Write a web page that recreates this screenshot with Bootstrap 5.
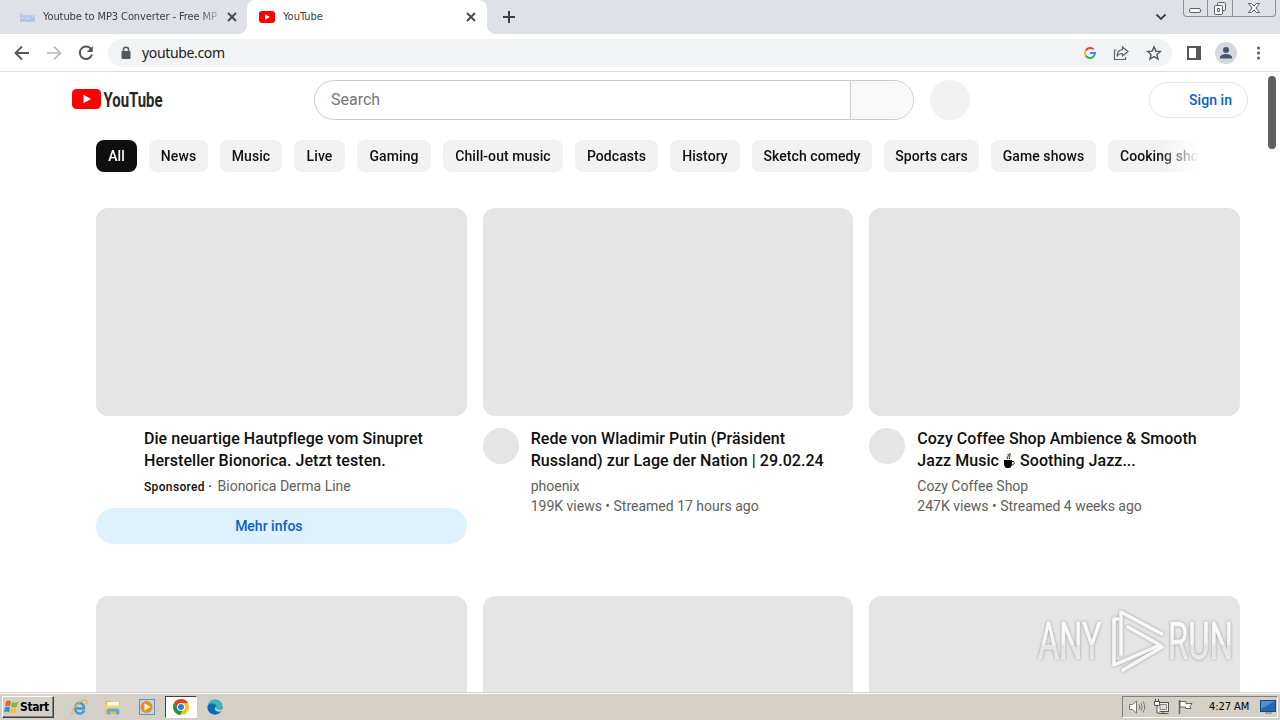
<!DOCTYPE html>
<html lang="en">
<head>
    <meta charset="UTF-8">
    <meta name="viewport" content="width=device-width, initial-scale=1.0">
    <title>YouTube</title>
    <link href="https://cdn.jsdelivr.net/npm/bootstrap@5.3.0/dist/css/bootstrap.min.css" rel="stylesheet">
    <style>
        body { height: 720px; font-family: Roboto, sans-serif; color: #0f0f0f; background: #fff; }
        svg { display: block; flex: none; }
        .ui-font { font-family: "DejaVu Sans Condensed", "DejaVu Sans", sans-serif; }
        .medium-text { font-weight: 500; }

        /* browser frame */
        .tab-strip { height: 34px; background: #dee1e6; font-size: 11px; color: #3c4043; }
        .tab-back { width: 247px; height: 34px; padding: 0 8px 0 19px; }
        .tab-front { width: 240px; height: 34px; padding: 0 10px 0 12px; background: #fff; border-radius: 8px 8px 0 0; }
        .tab-front::before, .tab-front::after { content: ""; position: absolute; bottom: 0; width: 8px; height: 8px; }
        .tab-front::before { left: -8px; background: radial-gradient(circle at 0 0, transparent 7.5px, #fff 8px); }
        .tab-front::after { right: -8px; background: radial-gradient(circle at 100% 0, transparent 7.5px, #fff 8px); }
        .tab-title { width: 178px; letter-spacing: -.1px; -webkit-mask-image: linear-gradient(90deg, #000 155px, rgba(0, 0, 0, .25) 176px); }
        .win-buttons { width: 93px; height: 17px; border: 1px solid #8d9096; border-top: 0; border-radius: 0 0 4px 4px; }
        .win-buttons > div + div { border-left: 1px solid #8d9096; }
        .win-restore { width: 25px; }
        .toolbar { height: 38px; border-bottom: 1px solid #dadce0; padding: 0 13px; }
        .nav-icons { gap: 14px; }
        .omnibox { width: 1064px; height: 28px; border-radius: 14px; background: #f1f3f4; margin-left: 13px; padding: 0 10px 0 12px; }
        .omni-icons { gap: 17px; }
        .address { font-family: "Noto Sans", sans-serif; font-size: 14px; color: #202124; letter-spacing: -.35px; padding-left: 10px; }
        .tool-icons { gap: 14px; margin-left: 15px; }
        .profile { width: 22px; height: 22px; background: #d5d9df; }

        /* page */
        .viewport-area { height: 620px; }
        .masthead { height: 56px; padding-left: 72px; padding-right: 32px; }
        .search-box { width: 600px; height: 40px; border: 1px solid #ccc; border-radius: 20px; font-size: 16px; color: #777; margin-left: 151px; }
        .search-go { width: 63px; background: #f8f8f8; border-left: 1px solid #ccc; }
        .voice { width: 40px; height: 40px; background: #f2f2f2; margin-left: 16px; }
        .sign-in { width: 99px; height: 36px; border: 1px solid #e5e5e5; color: #065fd4; font-size: 14px; padding-right: 15px; letter-spacing: .05px; }
        .chip-bar { display: grid; grid-template-columns: 41px 59px 62px 51px 74px 120px 83px 70px 120px 95px 105px 110px; align-items: center; height: 56px; width: 1101px; margin-left: 96px; gap: 12px; -webkit-mask-image: linear-gradient(90deg, #000 1063px, transparent 1103px); }
        .chip { height: 32px; line-height: 32px; text-align: center; border-radius: 8px; background: #f2f2f2; font-size: 14px; letter-spacing: .07px; }
        .chip-on { background: #0f0f0f; color: #fff; }
        .video-grid { display: grid; grid-template-columns: repeat(3, 1fr); column-gap: 16px; margin: 24px 40px 0 96px; }
        .video-item { height: 388px; }
        .thumb { height: 208px; background: #e5e5e5; border-radius: 12px; }
        .details { gap: 12px; height: 80px; margin-top: 12px; }
        .avatar { width: 36px; height: 36px; }
        .avatar-grey { background: #e5e5e5; }
        .video-title { font-size: 16px; line-height: 22px; letter-spacing: .05px; }
        .video-meta { font-size: 14px; line-height: 20px; color: #606060; }
        .sponsored { font-size: 12px; color: #0f0f0f; letter-spacing: .35px; margin-right: 2px; }
        .cup { display: inline-block; vertical-align: -3px; margin: 0 1px; }
        .more-info { height: 36px; background: #def1ff; color: #065fd4; font-size: 14px; padding-right: 25px; }
        .scroll-thumb { position: absolute; right: 4px; top: 4px; width: 8px; height: 73px; border-radius: 4px; background: #606060; }
        .any-mark { position: absolute; left: 1030px; top: 530px; }

        /* desktop bar */
        .desk-bar { height: 28px; background: #d4d0c8; border-top: 1px solid #d4d0c8; box-shadow: inset 0 1px #fff; padding: 3px 2px 0; font-size: 11px; color: #000; }
        .start { width: 52px; height: 22px; border: 1px solid; border-color: #fff #404040 #404040 #fff; box-shadow: inset -1px -1px #808080; font-size: 12px; letter-spacing: -.4px; }
        .launch { gap: 16px; margin: 2px 0 0 16px; }
        .task-open { width: 32px; height: 22px; background: #fff; border: 1px solid; border-color: #404040 #fff #fff #404040; margin: 0 10px 0 9px; }
        .edge { margin-top: 3px; }
        .tray { width: 156px; height: 22px; border: 1px solid; border-color: #808080 #fff #fff #808080; padding: 0 1px 0 5px; gap: 7px; }
        .clock { margin-left: 8px; letter-spacing: -.05px; }
    </style>
</head>
<body class="overflow-hidden">
<header class="ui-font">
    <div class="tab-strip d-flex align-items-center">
        <div class="tab-back d-flex align-items-center">
            <svg width="16" height="12" viewBox="0 0 16 12"><path d="M2 2v7h3V5H2M7 5h3v4H7zM12 4v5l1.500-2 1.500 2V4M1 10h14" fill="none" stroke="#a9c3e8" stroke-width="1.400"/></svg>
            <div class="tab-title text-nowrap ms-2">Youtube to MP3 Converter - Free MP</div>
            <svg class="ms-auto" width="14" height="14"><path d="M3 3l8 8M11 3l-8 8" stroke="#45484c" stroke-width="1.800"/></svg>
        </div>
        <div class="tab-front position-relative d-flex align-items-center">
            <svg width="16" height="12"><rect width="16" height="12" rx="3" fill="#f00"/><path d="M6 3.300v5.400L11 6z" fill="#fff"/></svg>
            <div class="ms-2">YouTube</div>
            <svg class="ms-auto" width="12" height="12"><path d="M2 2l8 8M10 2l-8 8" stroke="#45484c" stroke-width="1.800"/></svg>
        </div>
        <svg class="ms-3" width="12" height="12"><path d="M6 0v12M0 6h12" stroke="#3c4043" stroke-width="2"/></svg>
        <svg class="ms-auto me-3" width="12" height="10"><path d="M1.500 2.500L6 7l4.500-4.500" fill="none" stroke="#3c4043" stroke-width="1.800"/></svg>
        <div class="win-buttons d-flex align-self-start me-1">
            <div class="col-3 d-flex justify-content-center"><svg width="14" height="16"><rect x="1.500" y="8.500" width="11" height="4" rx="1.500" fill="#f6f6f6" stroke="#5a5f69"/></svg></div>
            <div class="win-restore d-flex justify-content-center"><svg width="14" height="16"><rect x="4.500" y="2.500" width="8" height="8" rx="1" fill="#eee" stroke="#5a5f69"/><rect x="1.500" y="5.500" width="8" height="9" rx="1" fill="#f6f6f6" stroke="#5a5f69"/><path d="M4.500 8.500h2v3h-2z" fill="#fff" stroke="#5a5f69"/></svg></div>
            <div class="flex-fill d-flex justify-content-center"><svg width="14" height="16"><path d="M1.500 3.500h3L7 6l2.500-2.500h3L9 8l3.500 4.500h-3L7 10l-2.500 2.500h-3L5 8z" fill="#f6f6f6" stroke="#5a5f69"/></svg></div>
        </div>
    </div>
    <div class="toolbar d-flex align-items-center">
        <div class="nav-icons d-flex">
            <svg width="18" height="18"><path d="M16 9H3M9 2.500L2.500 9 9 15.500" fill="none" stroke="#55585d" stroke-width="1.900"/></svg>
            <svg width="18" height="18"><path d="M2 9h13M9 2.500L15.500 9 9 15.500" fill="none" stroke="#b4b6b9" stroke-width="1.700"/></svg>
            <svg width="18" height="18"><path d="M14.300 5.400A6.200 6.200 0 1 0 15 10.500" fill="none" stroke="#55585d" stroke-width="2"/><path d="M15.800 2v6h-6z" fill="#55585d"/></svg>
        </div>
        <div class="omnibox d-flex align-items-center">
            <svg width="12" height="14"><rect x="1.500" y="5" width="9" height="8" rx="1" fill="#55585d"/><path d="M3.500 6V3.800a2.500 2.500 0 0 1 5 0V6" fill="none" stroke="#55585d" stroke-width="1.500"/></svg>
            <div class="address flex-fill">youtube.com</div>
            <div class="omni-icons d-flex align-items-center">
                <svg width="12" height="12" fill="none" stroke-width="2"><path d="M1.700 3.500A5 5 0 0 1 9.500 2.400" stroke="#ea4335"/><path d="M1.700 8.500a5 5 0 0 1 0-5" stroke="#fbbc05"/><path d="M9.300 9.800A5 5 0 0 1 1.700 8.500" stroke="#34a853"/><path d="M6 6h5a5 5 0 0 1-1.700 3.800" stroke="#4285f4"/></svg>
                <svg width="16" height="16"><path d="M3.500 5H1.500v9.500h11V12M9.500 2l5.500 4.500L9.500 11V8.500C7 8.500 5 9.500 4 11.500c0-4 2-6.500 5.500-6.800z" fill="none" stroke="#5f6368" stroke-width="1.200"/></svg>
                <svg width="16" height="16"><path d="M8 1.800l1.800 4.300 4.600.4-3.500 3 1.100 4.500L8 11.600 4 14l1.100-4.500-3.500-3 4.600-.4z" fill="none" stroke="#55585d" stroke-width="1.400"/></svg>
            </div>
        </div>
        <div class="tool-icons d-flex align-items-center">
            <svg width="14" height="14"><path d="M1 1h12v12H1z" fill="#fff" stroke="#55585d" stroke-width="2"/><path d="M9 0h5v14H9z" fill="#55585d"/></svg>
            <div class="profile rounded-circle d-flex justify-content-center align-items-center">
                <svg width="14" height="14"><circle cx="7" cy="4" r="3" fill="#48566c"/><path d="M1 12.500V11c0-2 4-3 6-3s6 1 6 3v1.500z" fill="#48566c"/></svg>
            </div>
            <svg class="ms-1" width="6" height="14" fill="#55585d"><circle cx="3.500" cy="2" r="1.500"/><circle cx="3.500" cy="7" r="1.500"/><circle cx="3.500" cy="12" r="1.500"/></svg>
        </div>
    </div>
</header>

<main class="viewport-area position-relative overflow-hidden">
    <div class="masthead d-flex align-items-center">
        <svg width="91" height="24" viewBox="0 0 91 24">
            <rect y="1" width="29" height="20" rx="4.500" fill="#f00"/>
            <path d="M11.500 6.700v8.600L19 11z" fill="#fff"/>
            <text transform="translate(31.500 18.500) scale(.72 1)" font-family="Roboto" font-size="21" font-weight="700" textLength="82" lengthAdjust="spacingAndGlyphs" fill="#282828">YouTube</text>
        </svg>
        <div class="search-box d-flex overflow-hidden">
            <div class="flex-fill d-flex align-items-center ps-3">Search</div>
            <div class="search-go"></div>
        </div>
        <div class="voice rounded-circle"></div>
        <div class="sign-in medium-text rounded-pill ms-auto d-flex align-items-center justify-content-end">Sign in</div>
    </div>

    <div class="chip-bar medium-text overflow-hidden text-nowrap">
        <div class="chip chip-on">All</div>
        <div class="chip">News</div>
        <div class="chip">Music</div>
        <div class="chip">Live</div>
        <div class="chip">Gaming</div>
        <div class="chip">Chill-out music</div>
        <div class="chip">Podcasts</div>
        <div class="chip">History</div>
        <div class="chip">Sketch comedy</div>
        <div class="chip">Sports cars</div>
        <div class="chip">Game shows</div>
        <div class="chip text-start ps-2"><span class="ps-1">Cooking sho</span></div>
    </div>

    <div class="video-grid">
        <div class="video-item">
            <div class="thumb"></div>
            <div class="details d-flex">
                <div class="avatar"></div>
                <div>
                    <div class="video-title medium-text">Die neuartige Hautpflege vom Sinupret<br>Hersteller Bionorica. Jetzt testen.</div>
                    <div class="video-meta mt-1"><span class="sponsored medium-text">Sponsored ·</span> Bionorica Derma Line</div>
                </div>
            </div>
            <div class="more-info medium-text rounded-pill d-flex align-items-center justify-content-center">Mehr infos</div>
        </div>
        <div class="video-item">
            <div class="thumb"></div>
            <div class="details d-flex">
                <div class="avatar avatar-grey rounded-circle"></div>
                <div>
                    <div class="video-title medium-text">Rede von Wladimir Putin (Präsident<br>Russland) zur Lage der Nation | 29.02.24</div>
                    <div class="video-meta mt-1">phoenix<br>199K views • Streamed 17 hours ago</div>
                </div>
            </div>
        </div>
        <div class="video-item">
            <div class="thumb"></div>
            <div class="details d-flex">
                <div class="avatar avatar-grey rounded-circle"></div>
                <div>
                    <div class="video-title medium-text">Cozy Coffee Shop Ambience &amp; Smooth<br>Jazz Music <svg class="cup" width="11" height="17"><path d="M0 8h8v4c0 2-1.500 4-3 4H3c-1.500 0-3-2-3-4z"/><path d="M8 9.500h1.300c1.500 0 1.500 3.500-1.800 3.500M3.500 7c-1.500-2 2-2.500.5-5M5.500 7c-1-2 1.500-3 .3-6" fill="none" stroke="#0f0f0f"/></svg> Soothing Jazz...</div>
                    <div class="video-meta mt-1">Cozy Coffee Shop<br>247K views • Streamed 4 weeks ago</div>
                </div>
            </div>
        </div>
        <div class="thumb"></div>
        <div class="thumb"></div>
        <div class="thumb"></div>
    </div>

    <div class="scroll-thumb"></div>
    <svg class="any-mark" width="210" height="74" viewBox="0 0 210 74">
        <defs>
            <linearGradient id="fade" x1="0" y1="0" x2="0" y2="1"><stop offset="0" stop-color="#fff"/><stop offset=".55" stop-color="#f5f5f5"/><stop offset=".57" stop-color="#e2e2e2"/><stop offset="1" stop-color="#f2f2f2"/></linearGradient>
            <filter id="soft" x="-10%" y="-20%" width="120%" height="140%"><feDropShadow dx="0" dy="0" stdDeviation="1.500" flood-color="#777" flood-opacity=".75"/></filter>
        </defs>
        <g filter="url(#soft)" fill="url(#fade)" stroke="#f2f2f2" stroke-width=".5" font-family="Roboto" font-size="52">
            <text transform="translate(8 57) scale(.7 1)" textLength="91" lengthAdjust="spacingAndGlyphs">ANY</text>
            <text transform="translate(138 57) scale(.7 1)" textLength="93" lengthAdjust="spacingAndGlyphs">RUN</text>
        </g>
        <g filter="url(#soft)" fill="none" stroke="#f7f7f7" stroke-width="3.500" stroke-linecap="round" stroke-linejoin="round">
            <path d="M91 52V10L132 32"/>
            <path d="M88 17h-4v46l46-20L98 25"/>
            <path d="M93 68l39-23"/>
        </g>
    </svg>
</main>

<footer class="desk-bar ui-font d-flex align-items-start">
    <div class="start d-flex align-items-center fw-bold">
        <svg width="17" height="16"><path d="M3 2.500c2-1.500 3.500-1 5 0L7 7.500c-2-1-3-1-5 0z" fill="#e9622a"/><path d="M9 3c2 1 3.500 1 6-.5l-1 5c-2 1.500-4 1-6 .5z" fill="#7dba3c"/><path d="M2 8.500c2-1 3-1 5 0l-1 5c-2-1.200-3-1.200-5 0z" fill="#3b86d6"/><path d="M8 9c2 1 3.500 1 5.500-.5l-1 5c-2 1.500-3.500 1-5.500.5z" fill="#f6c032"/></svg>Start
    </div>
    <div class="launch d-flex">
        <svg width="18" height="18"><path d="M15.200 10.500H5.500M5.500 9a4 4 0 0 1 8.200 0v1M5.500 9.500a4.500 4.500 0 0 0 8.500 3" fill="none" stroke="#3e9bd8" stroke-width="2.600"/><path d="M2.500 16C-.5 13 11 0 16.500 2.500c.8 1 .3 2.500-.5 3.500" fill="none" stroke="#e0b847" stroke-width="1.300"/></svg>
        <svg width="18" height="18"><path d="M1.500 3h6l1 2H16v11H1.500z" fill="#dfb950"/><path d="M3 4h12v5H3z" fill="#fff8d7"/><path d="M1.500 7.500h15V12h-15z" fill="#f0d57c"/><path d="M3 16.500v-4q0-2 2-2h8q2 0 2 2v4h-3v-3H6v3z" fill="#62a9d6"/></svg>
        <svg width="18" height="18"><rect x="1.500" y="1.500" width="15" height="15" fill="#b9d9f1" stroke="#5d94c5"/><circle cx="8.500" cy="9" r="6" fill="#f18a18"/><path d="M6.500 5.500v7l6-3.500z" fill="#fff"/></svg>
    </div>
    <div class="task-open d-flex align-items-center justify-content-center">
        <svg width="16" height="16"><circle cx="8" cy="8" r="8" fill="#fbc116"/><path d="M1.100 4A8 8 0 0 1 14.900 4H8L5 10z" fill="#e33b2e"/><path d="M1.100 4A8 8 0 0 0 7 15.900L10.500 10 5 10z" fill="#229342"/><circle cx="8" cy="8" r="4" fill="#fff"/><circle cx="8" cy="8" r="3" fill="#3479e0"/></svg>
    </div>
    <svg class="edge" width="16" height="16"><circle cx="8" cy="8" r="7.500" fill="#147fc8"/><path d="M.8 6.500C2 1 8 0 11 1.500c4 2 5.500 6 3 8-1.500 1-4.500.5-5-.5 1.500-4-4-5-8.200-2.500" fill="#38b9c0"/><path d="M1 6.500C5 2.500 9.500 5 9.300 8c-3-2-4 3 0 5 2 1 4 .5 5.200-.7C10 18 1 15.500.6 9z" fill="#1268b5"/><path d="M9 8c-.5 2 2 3.500 6.500 2l-1 2C11 14 6 11 9 8" fill="#d4d0c8"/></svg>

    <div class="tray d-flex align-items-center ms-auto">
        <svg width="18" height="16" fill="none" stroke="#77756f"><path d="M1.500 5.500h3L8.500 2v12l-4-3.500h-3z" fill="#fff"/><path d="M11 5.500q1.500 2.500 0 5M13 4q2.500 4 0 8M15 2.500q3.500 5.500 0 11"/></svg>
        <svg width="17" height="16"><rect x="4.500" y="3.500" width="11" height="9" fill="#eee" stroke="#55534f"/><path d="M7 5.500h6.500v5H7z" fill="#ddd" stroke="#888"/><path d="M6.500 14.500h9M10 12v2" stroke="#55534f"/><path d="M1.500 2.500h5v4h-5zM2.500 0v2M5.500 0v2M4 6v8h3" fill="#fff" stroke="#55534f"/></svg>
        <svg width="17" height="16"><path d="M2.500 1v14" stroke="#66645e" stroke-width="1.500"/><path d="M3 2.500h6v2h6l-2 3 1 2H8.500v-1.500H3z" fill="#fff" stroke="#66645e"/></svg>
        <span class="clock text-nowrap">4:27 AM</span>
        <svg class="ms-auto" width="16" height="14"><rect x=".5" y=".5" width="15" height="11" fill="#2468b8" stroke="#174780"/><path d="M1 1h14L1 9z" fill="#4b91db"/><path d="M5 13h7" stroke="#777"/></svg>
    </div>
</footer>
<script src="https://cdn.jsdelivr.net/npm/bootstrap@5.3.0/dist/js/bootstrap.bundle.min.js"></script>
</body>
</html>
